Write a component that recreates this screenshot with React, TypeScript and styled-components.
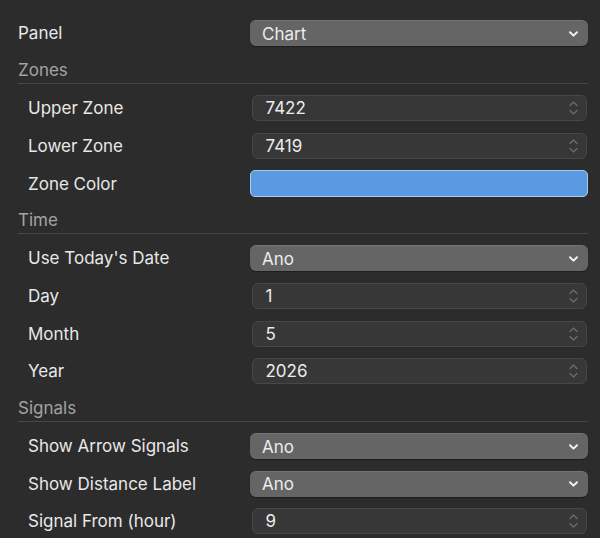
import styled, { createGlobalStyle } from "styled-components";

const GlobalStyle = createGlobalStyle`
  html, body {
    margin: 0;
    padding: 0;
    background: #2c2c2c;
  }
  body {
    font-family: Inter, "Liberation Sans", sans-serif;
    -webkit-font-smoothing: antialiased;
  }
`;

const Form = styled.div`
  width: 600px;
  height: 538px;
  box-sizing: border-box;
  padding: 20px 12px 0 18px;
  display: flex;
  flex-direction: column;
  overflow: hidden;
`;

const Row = styled.div<{ $nested?: boolean }>`
  display: grid;
  grid-template-columns: ${(p) => (p.$nested ? "222px 1fr" : "232px 1fr")};
  align-items: center;
  height: 26px;
  padding-left: ${(p) => (p.$nested ? "10px" : "0")};
  margin-top: ${(p) => (p.$nested ? "11.6px" : "0")};
`;

const Label = styled.div`
  font-size: 17px;
  color: #e8e8e8;
  white-space: nowrap;
`;

const SectionHeader = styled.div`
  font-size: 17px;
  line-height: 20px;
  color: #a3a3a3;
  padding: 13.5px 0 3px;
  border-bottom: 1px solid #464646;
  margin-bottom: 0.5px;
`;

const Select = styled.div`
  height: 26px;
  box-sizing: border-box;
  background: #656565;
  border-radius: 6px;
  border-top: 1px solid #747474;
  box-shadow: 0 1px 1px rgba(0, 0, 0, 0.35);
  display: flex;
  align-items: center;
  justify-content: space-between;
  padding: 0 9px 0 12px;
  font-size: 17px;
  color: #ececec;
`;

const NumberField = styled.div`
  height: 26px;
  margin: 0 1.5px;
  box-sizing: border-box;
  background: #373737;
  border: 1px solid #474747;
  border-radius: 6px;
  display: flex;
  align-items: center;
  justify-content: space-between;
  padding: 0 7px 0 13px;
  font-size: 17px;
  color: #ececec;
`;

const ColorWell = styled.div<{ $color: string }>`
  height: 27px;
  box-sizing: border-box;
  background: ${(p) => p.$color};
  border: 1px solid #a9c9ee;
  border-radius: 5px;
`;

const Chevron = () => (
  <svg width="11" height="8" viewBox="0 0 11 8">
    <path
      d="M2 2.2 L5.5 5.6 L9 2.2"
      fill="none"
      stroke="#f0f0f0"
      strokeWidth="2"
      strokeLinecap="round"
      strokeLinejoin="round"
    />
  </svg>
);

const Stepper = () => (
  <svg width="11" height="18" viewBox="0 0 11 18">
    <path
      d="M2 6.5 L5.5 3 L9 6.5 M2 11.5 L5.5 15 L9 11.5"
      fill="none"
      stroke="#6a6a6a"
      strokeWidth="1.4"
      strokeLinecap="round"
      strokeLinejoin="round"
    />
  </svg>
);

type Field =
  | { kind: "select"; label: string; value: string }
  | { kind: "number"; label: string; value: string }
  | { kind: "color"; label: string; value: string };

const sections: { title: string; fields: Field[] }[] = [
  {
    title: "Zones",
    fields: [
      { kind: "number", label: "Upper Zone", value: "7422" },
      { kind: "number", label: "Lower Zone", value: "7419" },
      { kind: "color", label: "Zone Color", value: "#5a9ae0" },
    ],
  },
  {
    title: "Time",
    fields: [
      { kind: "select", label: "Use Today's Date", value: "Ano" },
      { kind: "number", label: "Day", value: "1" },
      { kind: "number", label: "Month", value: "5" },
      { kind: "number", label: "Year", value: "2026" },
    ],
  },
  {
    title: "Signals",
    fields: [
      { kind: "select", label: "Show Arrow Signals", value: "Ano" },
      { kind: "select", label: "Show Distance Label", value: "Ano" },
      { kind: "number", label: "Signal From (hour)", value: "9" },
    ],
  },
];

const Control = ({ field }: { field: Field }) => {
  if (field.kind === "select")
    return (
      <Select>
        <span>{field.value}</span>
        <Chevron />
      </Select>
    );
  if (field.kind === "color") return <ColorWell $color={field.value} />;
  return (
    <NumberField>
      <span>{field.value}</span>
      <Stepper />
    </NumberField>
  );
};

export default function App() {
  return (
    <>
      <GlobalStyle />
      <Form>
        <Row>
          <Label>Panel</Label>
          <Select>
            <span>Chart</span>
            <Chevron />
          </Select>
        </Row>
        {sections.map((s) => (
          <div key={s.title}>
            <SectionHeader>{s.title}</SectionHeader>
            {s.fields.map((f) => (
              <Row $nested key={f.label}>
                <Label>{f.label}</Label>
                <Control field={f} />
              </Row>
            ))}
          </div>
        ))}
      </Form>
    </>
  );
}
